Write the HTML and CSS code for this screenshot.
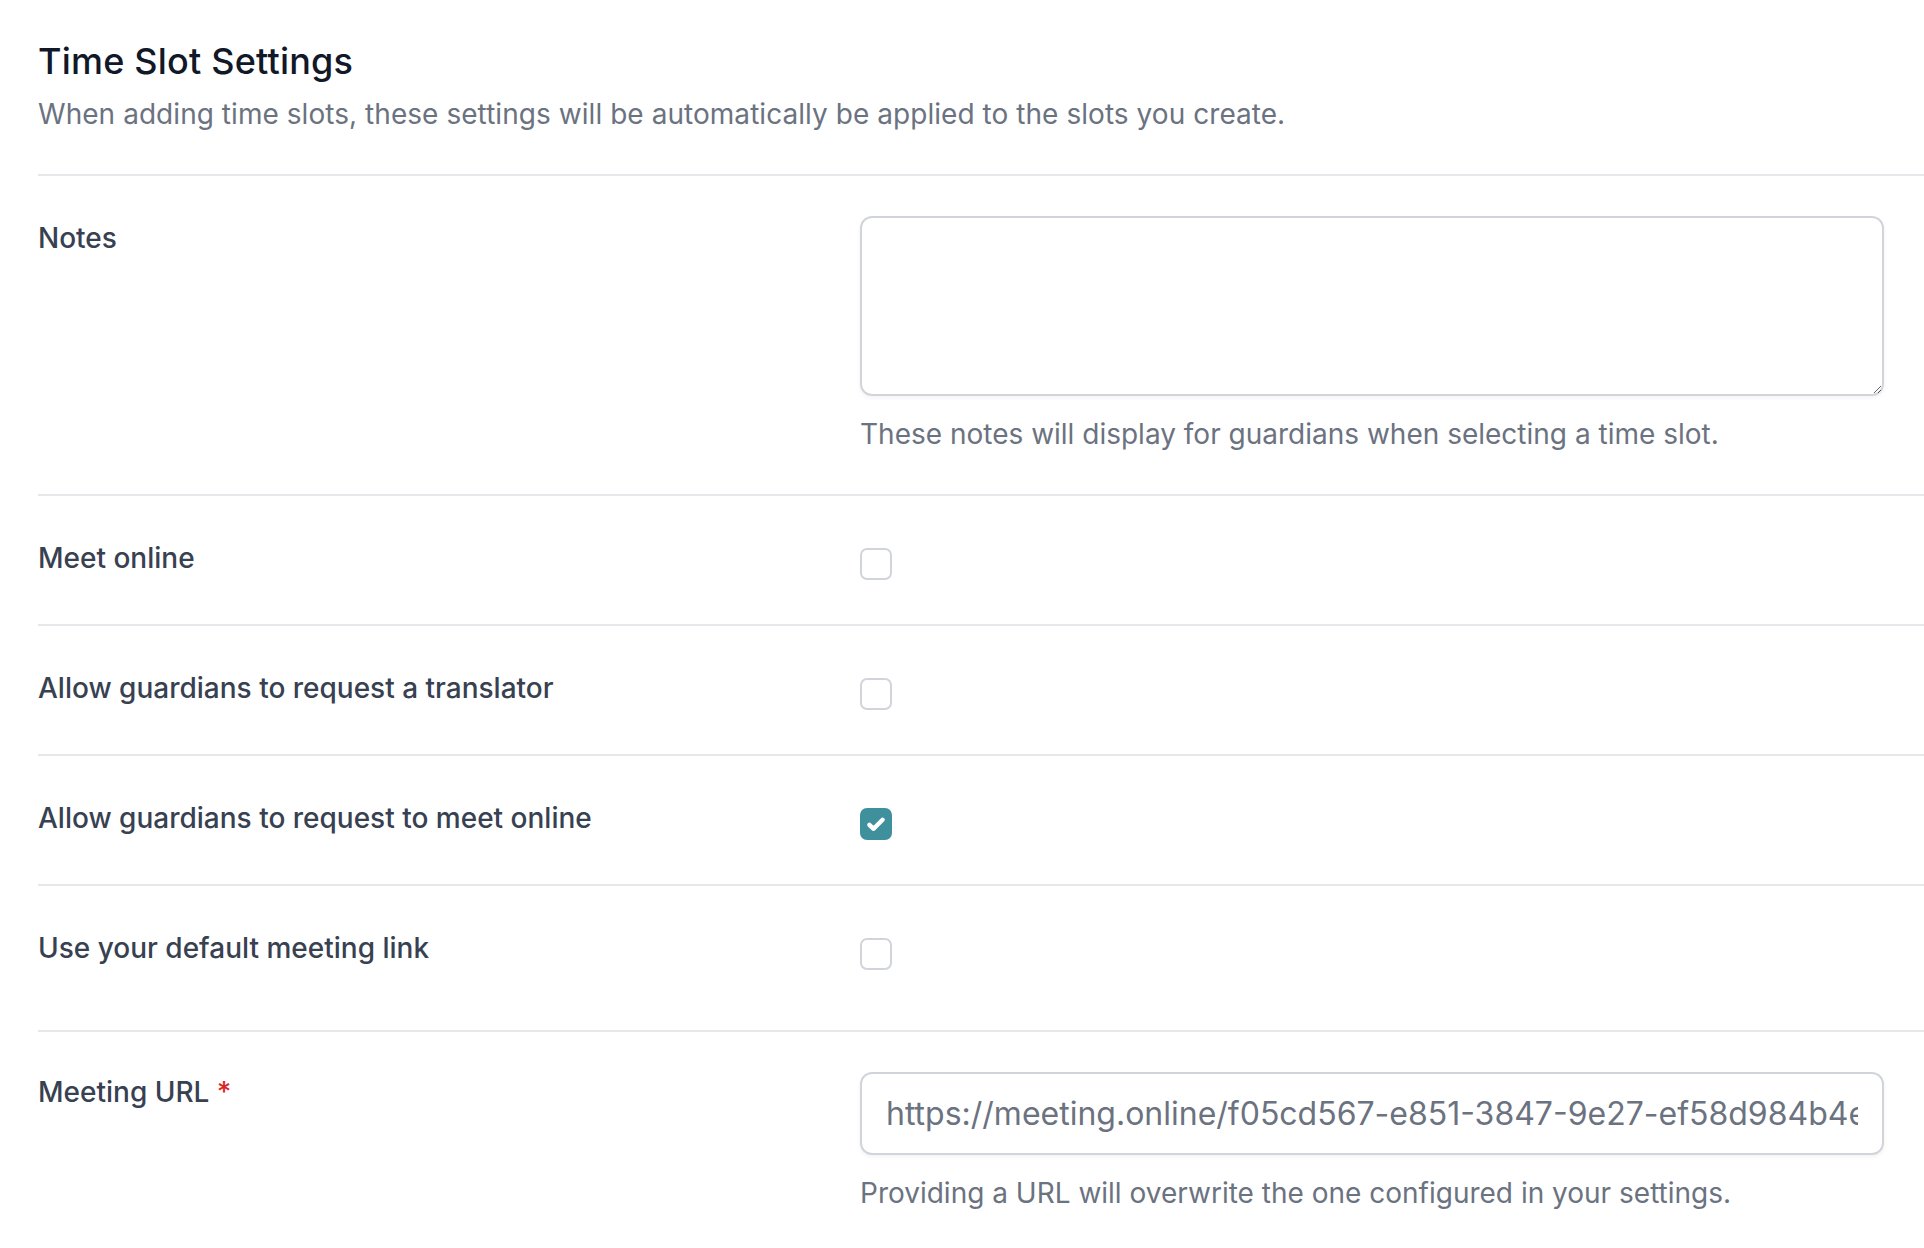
FILE: index.html
```html
<!DOCTYPE html>
<html lang="en">
<head>
<meta charset="utf-8">
<title>Time Slot Settings</title>
<link rel="stylesheet" href="styles.css">
</head>
<body>
<div class="page">
  <header class="head">
    <h1 class="title">Time Slot Settings</h1>
    <p class="desc">When adding time slots, these settings will be automatically be applied to the slots you create.</p>
  </header>

  <div class="row">
    <label class="label" for="notes">Notes</label>
    <div class="control">
      <textarea id="notes" class="textarea"></textarea>
      <p class="help">These notes will display for guardians when selecting a time slot.</p>
    </div>
  </div>

  <div class="row">
    <label class="label" for="c1">Meet online</label>
    <div class="control check-wrap">
      <span class="checkbox" id="c1"></span>
    </div>
  </div>

  <div class="row">
    <label class="label" for="c2">Allow guardians to request a translator</label>
    <div class="control check-wrap">
      <span class="checkbox" id="c2"></span>
    </div>
  </div>

  <div class="row">
    <label class="label" for="c3">Allow guardians to request to meet online</label>
    <div class="control check-wrap">
      <span class="checkbox checked" id="c3">
        <svg viewBox="0 0 16 16" width="32" height="32"><path d="M4.7 8.4l2.1 2 4.5-4.5" fill="none" stroke="#fff" stroke-width="2.2" stroke-linecap="round" stroke-linejoin="round"/></svg>
      </span>
    </div>
  </div>

  <div class="row row-tall">
    <label class="label" for="c4">Use your default meeting link</label>
    <div class="control check-wrap">
      <span class="checkbox" id="c4"></span>
    </div>
  </div>

  <div class="row">
    <label class="label label-url" for="url">Meeting URL <span class="req">*</span></label>
    <div class="control">
      <input id="url" class="input" type="text" value="https://meeting.online/f05cd567-e851-3847-9e27-ef58d984b4e1">
      <p class="help help-url">Providing a URL will overwrite the one configured in your settings.</p>
    </div>
  </div>
</div>
</body>
</html>
```

FILE: styles.css
```css
* { box-sizing: border-box; }

html, body {
  margin: 0;
  padding: 0;
  background: #ffffff;
  overflow: hidden;
}

body {
  font-family: Inter, "Noto Sans", "Liberation Sans", sans-serif;
  color: #374151;
}

.page {
  padding: 37px 0 0 38px;
  width: 1924px;
}

.head {
  padding-bottom: 40px;
}

.title {
  margin: 0;
  font-size: 36px;
  line-height: 48px;
  font-weight: 500;
  color: #111827;
  letter-spacing: 0.2px;
}

.desc {
  margin: 9px 0 0;
  font-size: 28px;
  line-height: 40px;
  color: #6b7280;
  letter-spacing: 0.05px;
}

.row {
  display: grid;
  grid-template-columns: 790px 1fr;
  column-gap: 32px;
  align-items: start;
  border-top: 2px solid #e5e7eb;
  padding: 40px 0 40px;
}

.row-tall {
  padding-bottom: 56px;
}

.label {
  display: block;
  margin-top: 2px;
  font-size: 28px;
  line-height: 40px;
  font-weight: 500;
  color: #374151;
}

.label-url {
  margin-top: 0;
}

.req {
  color: #dc2626;
}

.control {
  display: flex;
  flex-direction: column;
}

.textarea {
  display: block;
  width: 1024px;
  height: 180px;
  border: 2px solid #d1d5db;
  border-radius: 12px;
  box-shadow: 0 2px 4px rgba(0, 0, 0, 0.05);
  font-family: inherit;
  font-size: 28px;
  padding: 16px 24px;
  resize: vertical;
  outline: none;
  background: #fff;
}

.help {
  margin: 18px 0 0;
  font-size: 28px;
  line-height: 40px;
  color: #6b7280;
}

.help-url {
  margin-top: 18px;
}

.check-wrap {
  min-height: 48px;
}

.checkbox {
  display: block;
  width: 32px;
  height: 32px;
  margin-top: 12px;
  border: 2px solid #d1d5db;
  border-radius: 7px;
  background: #fff;
}

.checkbox.checked {
  border-color: #3f909d;
  background: #3f909d;
  position: relative;
}

.checkbox.checked svg {
  position: absolute;
  left: -2px;
  top: -2px;
}

.input {
  display: block;
  width: 1024px;
  height: 83px;
  border: 2px solid #d1d5db;
  border-radius: 12px;
  box-shadow: 0 2px 4px rgba(0, 0, 0, 0.05);
  font-family: inherit;
  font-size: 32px;
  color: #6b7280;
  padding: 0 24px;
  outline: none;
  background: #fff;
}
```
